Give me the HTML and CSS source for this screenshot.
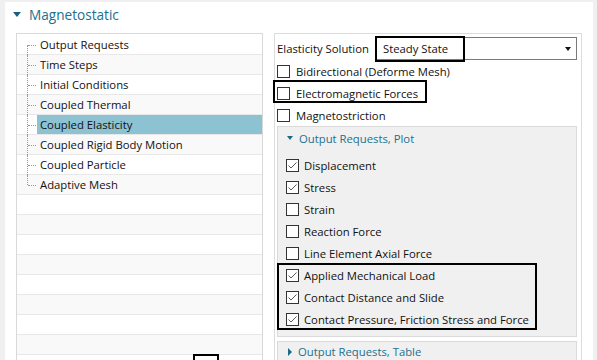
FILE: index.html
```html
<!DOCTYPE html>
<html>
<head>
<meta charset="utf-8">
<link rel="stylesheet" href="styles.css">
</head>
<body>
<div class="window">
  <div class="title"><span class="tri-down"></span><span class="title-text">Magnetostatic</span></div>
  <div class="main">
    <div class="tree">
      <div class="row"><span class="branch first"></span><span class="label">Output Requests</span></div>
      <div class="row"><span class="branch"></span><span class="label">Time Steps</span></div>
      <div class="row"><span class="branch"></span><span class="label">Initial Conditions</span></div>
      <div class="row"><span class="branch"></span><span class="label">Coupled Thermal</span></div>
      <div class="row"><span class="branch"></span><span class="label selected">Coupled Elasticity</span></div>
      <div class="row"><span class="branch"></span><span class="label">Coupled Rigid Body Motion</span></div>
      <div class="row"><span class="branch"></span><span class="label">Coupled Particle</span></div>
      <div class="row"><span class="branch last"></span><span class="label">Adaptive Mesh</span></div>
      <div class="row"></div>
      <div class="row"></div>
      <div class="row"></div>
      <div class="row"></div>
      <div class="row"></div>
      <div class="row"></div>
      <div class="row"></div>
      <div class="row"></div>
      <div class="row"></div>
      <div class="mark mark-tree"></div>
    </div>
    <div class="props">
      <div class="field">
        <span class="field-label">Elasticity Solution</span>
        <div class="combo">
          <span class="combo-text">Steady State</span>
          <span class="combo-arrow"></span>
          <div class="mark mark-combo"></div>
        </div>
      </div>
      <div class="check"><span class="box"></span><span>Bidirectional (Deforme Mesh)</span></div>
      <div class="check"><span class="box"></span><span>Electromagnetic Forces</span><div class="mark mark-em"></div></div>
      <div class="check"><span class="box"></span><span>Magnetostriction</span></div>
      <div class="group">
        <div class="group-head"><span class="tri-down small"></span><span>Output Requests, Plot</span></div>
        <div class="group-items">
          <div class="check"><span class="box"><svg viewBox="0 0 11 11" width="11" height="11"><polyline points="1.5,5.5 4,8 9.5,2.5" fill="none" stroke="#5a5a5a" stroke-width="1"/></svg></span><span>Displacement</span></div>
          <div class="check"><span class="box"><svg viewBox="0 0 11 11" width="11" height="11"><polyline points="1.5,5.5 4,8 9.5,2.5" fill="none" stroke="#5a5a5a" stroke-width="1"/></svg></span><span>Stress</span></div>
          <div class="check"><span class="box"></span><span>Strain</span></div>
          <div class="check"><span class="box"></span><span>Reaction Force</span></div>
          <div class="check"><span class="box"></span><span>Line Element Axial Force</span></div>
          <div class="marked">
            <div class="check"><span class="box"><svg viewBox="0 0 11 11" width="11" height="11"><polyline points="1.5,5.5 4,8 9.5,2.5" fill="none" stroke="#5a5a5a" stroke-width="1"/></svg></span><span>Applied Mechanical Load</span></div>
            <div class="check"><span class="box"><svg viewBox="0 0 11 11" width="11" height="11"><polyline points="1.5,5.5 4,8 9.5,2.5" fill="none" stroke="#5a5a5a" stroke-width="1"/></svg></span><span>Contact Distance and Slide</span></div>
            <div class="check"><span class="box"><svg viewBox="0 0 11 11" width="11" height="11"><polyline points="1.5,5.5 4,8 9.5,2.5" fill="none" stroke="#5a5a5a" stroke-width="1"/></svg></span><span>Contact Pressure, Friction Stress and Force</span></div>
            <div class="mark mark-loads"></div>
          </div>
        </div>
      </div>
      <div class="group collapsed">
        <div class="group-head"><span class="tri-right"></span><span>Output Requests, Table</span></div>
      </div>
    </div>
  </div>
</div>
</body>
</html>
```
FILE: styles.css
```css
html, body {
  margin: 0;
  padding: 0;
  height: 100%;
  overflow: hidden;
}
body {
  background: #f0f0f0;
  font-family: "Open Sans", "Noto Sans", sans-serif;
  font-size: 11.3px;
  color: #111;
}
.window {
  margin: 2px 4px 0 5px;
  height: 358px;
  background: #fff;
  overflow: hidden;
}
.title {
  height: 24px;
  display: flex;
  align-items: center;
  padding-left: 8px;
  color: #22708f;
  font-size: 13.6px;
}
.tri-down {
  width: 0;
  height: 0;
  border-left: 4px solid transparent;
  border-right: 4px solid transparent;
  border-top: 5px solid #1b5f7f;
}
.tri-down.small {
  border-left-width: 3px;
  border-right-width: 3px;
  border-top-width: 4px;
  border-top-color: #1b6a8a;
}
.tri-right {
  width: 0;
  height: 0;
  border-top: 4px solid transparent;
  border-bottom: 4px solid transparent;
  border-left: 4px solid #1b6a8a;
}
.title-text {
  margin-left: 8px;
}
.main {
  display: flex;
  padding-left: 11px;
  margin-top: 7px;
  height: 330px;
}
.tree {
  position: relative;
  width: 247px;
  box-sizing: border-box;
  flex: none;
  border: 1px solid #d9d9d9;
  border-bottom: none;
  padding-top: 1px;
  overflow: hidden;
}
.row {
  height: 19px;
  border-bottom: 1px solid #e8e8e8;
  display: flex;
}
.row:nth-child(even) {
  background: #f9f9f9;
}
.branch {
  position: relative;
  flex: none;
  width: 10px;
  margin-left: 10px;
}
.branch::before {
  content: "";
  position: absolute;
  left: 0;
  top: 0;
  bottom: -1px;
  border-left: 1px dotted #9a9a9a;
}
.branch.first::before {
  top: 10px;
}
.branch.last::before {
  bottom: 9px;
}
.branch::after {
  content: "";
  position: absolute;
  left: 1px;
  top: 10px;
  width: 8px;
  border-top: 1px dotted #9a9a9a;
}
.label {
  flex: 1;
  padding-left: 3px;
  line-height: 20px;
  white-space: nowrap;
}
.label.selected {
  background: #8cc2d2;
}
.mark {
  position: absolute;
  box-sizing: border-box;
  border: 2px solid #000;
  pointer-events: none;
}
.mark-tree {
  left: 176px;
  top: 320px;
  width: 26px;
  height: 24px;
}
.props {
  margin-left: 11px;
  width: 308px;
  box-sizing: border-box;
  flex: none;
  border: 1px solid #dcdcdc;
  border-bottom: none;
  padding: 3px 4px 0 2px;
}
.field {
  display: flex;
  align-items: center;
  height: 23px;
}
.combo {
  position: relative;
  margin-left: auto;
  width: 201px;
  height: 23px;
  box-sizing: border-box;
  border: 1px solid #7a7a7a;
  display: flex;
  align-items: center;
  padding-left: 6px;
}
.combo-arrow {
  margin-left: auto;
  margin-right: 5px;
  width: 0;
  height: 0;
  border-left: 3.5px solid transparent;
  border-right: 3.5px solid transparent;
  border-top: 4px solid #111;
}
.mark-combo {
  left: -2px;
  top: -2px;
  width: 90px;
  height: 26px;
}
.check {
  position: relative;
  display: flex;
  align-items: center;
  height: 22px;
  white-space: nowrap;
}
.box {
  width: 13px;
  height: 13px;
  box-sizing: border-box;
  border: 1px solid #333;
  background: #fff;
  margin-right: 6px;
  flex: none;
  display: flex;
}
.mark-em {
  left: -4px;
  top: -2px;
  width: 154px;
  height: 23px;
}
.group {
  border: 1px solid #dadada;
  background: #f0f0f0;
}
.group-head {
  height: 22px;
  display: flex;
  align-items: center;
  padding-left: 9px;
  color: #22708f;
}
.group-head > span:last-child {
  margin-left: 6px;
}
.group-items {
  padding: 5px 0 6px 8px;
}
.group-items .box {
  margin-right: 5px;
}
.marked {
  position: relative;
}
.mark-loads {
  left: -9px;
  top: -1px;
  width: 260px;
  height: 67px;
}
.group.collapsed {
  margin-top: 4px;
}
.group.collapsed .group-head {
  height: 19px;
  padding-left: 10px;
}
```
